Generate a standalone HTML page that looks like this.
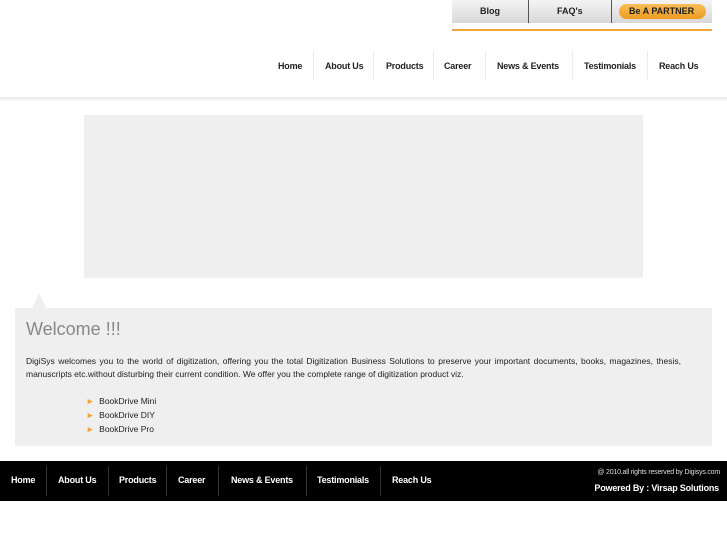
<!DOCTYPE html><html><head><style>
body{margin:0;width:727px;height:545px;background:#fff;font-family:"Liberation Sans",sans-serif;position:relative;overflow:hidden}
.a{position:absolute}
.tb{left:452px;top:0;width:260px;height:23px;background:linear-gradient(#f4f4f4,#d8d8d8)}
.tb span{position:absolute;top:6px;font-size:9px;font-weight:bold;color:#222}
.nav{top:61px;font-size:9px;font-weight:bold;color:#222;letter-spacing:-0.2px}
.sep{top:52px;width:0;height:28px;border-left:1px dotted #ddd}
.fn{top:475px;font-size:9px;font-weight:bold;color:#fff;letter-spacing:-0.2px}
.fs{top:466px;height:30px;width:1px;background:#333}
</style></head><body>
<div class="a tb"><div class="a" style="left:76px;top:0;width:1px;height:23px;background:#555"></div><div class="a" style="left:159px;top:0;width:1px;height:23px;background:#555"></div>
<span style="left:28px">Blog</span><span style="left:105px">FAQ's</span>
<div class="a" style="left:167px;top:4px;width:87px;height:15px;border-radius:8px;background:linear-gradient(#f9be5a,#ec9a1f)"></div><span style="left:177px;top:6px">Be A PARTNER</span></div>
<div class="a" style="left:452px;top:29px;width:260px;height:2px;background:#f0a43a"></div>
<div class="a nav" style="left:278px">Home</div>
<div class="a nav" style="left:325px">About Us</div>
<div class="a nav" style="left:386px">Products</div>
<div class="a nav" style="left:444px">Career</div>
<div class="a nav" style="left:497px">News &amp; Events</div>
<div class="a nav" style="left:584px">Testimonials</div>
<div class="a nav" style="left:659px">Reach Us</div>
<div class="a sep" style="left:313px"></div><div class="a sep" style="left:373px"></div><div class="a sep" style="left:433px"></div><div class="a sep" style="left:485px"></div><div class="a sep" style="left:572px"></div><div class="a sep" style="left:647px"></div>
<div class="a" style="left:0;top:97px;width:727px;height:4px;background:linear-gradient(#e6e6e6,#fafafa)"></div>
<div class="a" style="left:84px;top:115px;width:559px;height:163px;background:#efefef"></div>
<div class="a" style="left:32px;top:293px;width:0;height:0;border-left:7px solid transparent;border-right:7px solid transparent;border-bottom:15px solid #efefef"></div>
<div class="a" style="left:15px;top:308px;width:697px;height:138px;background:#efefef"></div>
<div class="a" style="left:26px;top:319px;font-size:18px;color:#888">Welcome !!!</div>
<div class="a" style="left:26px;top:355px;width:655px;font-size:8.5px;line-height:13px;color:#222;text-align:justify;text-align-last:left">DigiSys welcomes you to the world of digitization, offering you the total Digitization Business Solutions to preserve your important documents, books, magazines, thesis, manuscripts etc.without disturbing their current condition. We offer you the complete range of digitization product viz.</div>
<div class="a" style="left:86px;top:394px;font-size:8.5px;line-height:14px;color:#222"><span style="color:#f0a43a">&#9658;</span>&nbsp; BookDrive Mini<br><span style="color:#f0a43a">&#9658;</span>&nbsp; BookDrive DIY<br><span style="color:#f0a43a">&#9658;</span>&nbsp; BookDrive Pro</div>
<div class="a" style="left:0;top:461px;width:727px;height:40px;background:#000"></div>
<div class="a fn" style="left:11px">Home</div><div class="a fn" style="left:58px">About Us</div><div class="a fn" style="left:119px">Products</div><div class="a fn" style="left:178px">Career</div><div class="a fn" style="left:231px">News &amp; Events</div><div class="a fn" style="left:317px">Testimonials</div><div class="a fn" style="left:392px">Reach Us</div>
<div class="a fs" style="left:46px"></div><div class="a fs" style="left:108px"></div><div class="a fs" style="left:166px"></div><div class="a fs" style="left:218px"></div><div class="a fs" style="left:306px"></div><div class="a fs" style="left:380px"></div>
<div class="a" style="right:7px;top:469px;font-size:7px;color:#ddd;letter-spacing:-0.2px">@ 2010.all rights reserved by Digisys.com</div>
<div class="a" style="right:8px;top:483px;font-size:9px;font-weight:bold;color:#fff;letter-spacing:-0.2px">Powered By : Virsap Solutions</div>
</body></html>
